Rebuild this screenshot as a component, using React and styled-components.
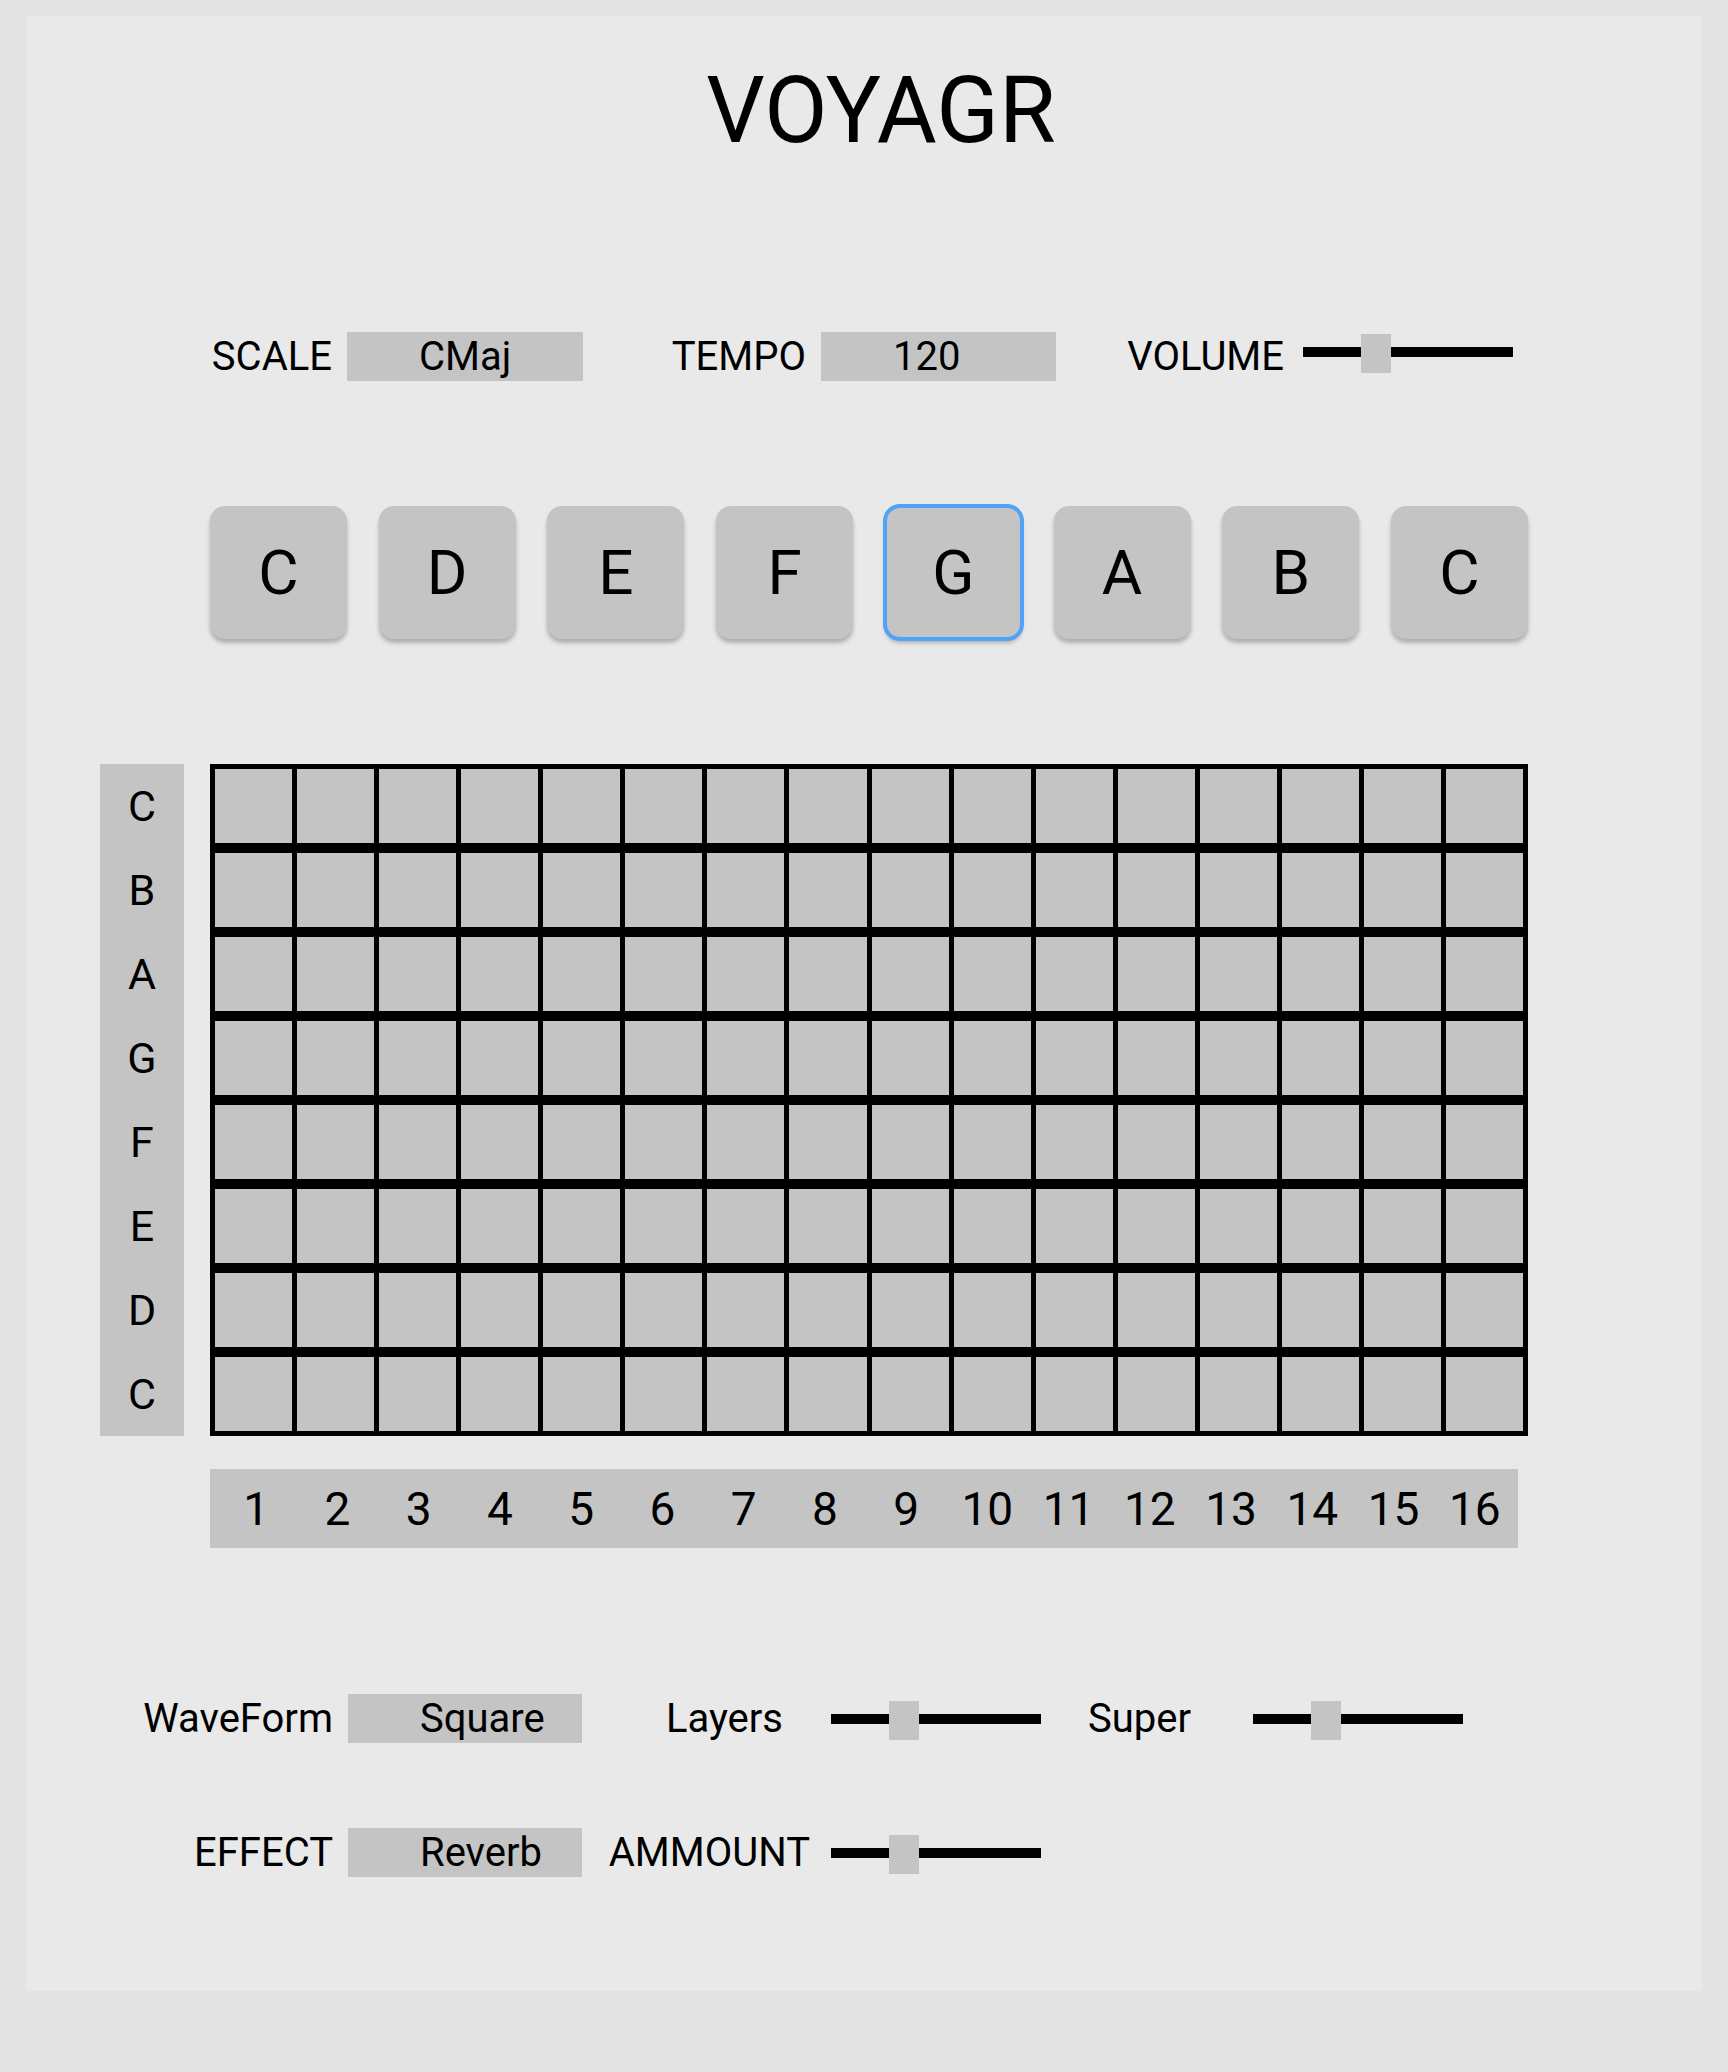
import React from "react"
import styled, { createGlobalStyle } from "styled-components"

const GlobalStyle = createGlobalStyle`
  html, body {
    margin: 0;
    padding: 0;
    background: #e3e3e3;
  }
  body {
    font-family: Roboto, "Liberation Sans", sans-serif;
    color: #000;
  }
`

const Page = styled.div`
  padding: 16px 26px 82px;
`

const Panel = styled.main`
  background: #e9e9e9;
  padding: 50px 0 114px;
  display: flex;
  flex-direction: column;
  align-items: flex-start;
`

const Title = styled.h1`
  align-self: stretch;
  margin: 0;
  padding-left: 34px;
  text-align: center;
  font-size: 92px;
  line-height: 90px;
  font-weight: 400;
`

const ControlRow = styled.div`
  display: flex;
  align-items: ${(p) => (p.top ? "flex-start" : "center")};
  margin-top: ${(p) => p.mt}px;
  margin-left: 100px;
`

const Field = styled.div`
  display: flex;
  align-items: inherit;
  gap: ${(p) => p.gap || 15}px;
`

const Label = styled.span`
  width: ${(p) => p.w}px;
  text-align: right;
  font-size: 40px;
  line-height: 49px;
  white-space: nowrap;
`

const ValueBox = styled.div`
  box-sizing: border-box;
  width: ${(p) => p.w || 236}px;
  height: 49px;
  padding-left: 72px;
  background: #c4c4c4;
  font-size: 40px;
  line-height: 49px;
`

const Slider = styled.input.attrs({ type: "range", min: 0, max: 100 })`
  -webkit-appearance: none;
  appearance: none;
  width: 210px;
  height: 39px;
  margin: 0;
  padding: 0;
  background: transparent;

  &::-webkit-slider-runnable-track {
    height: 10px;
    background: #000;
    border: none;
  }

  &::-webkit-slider-thumb {
    -webkit-appearance: none;
    appearance: none;
    width: 30px;
    height: 39px;
    margin-top: -13px;
    background: #c4c4c4;
    border: none;
    border-radius: 0;
  }
`

const NoteRow = styled.div`
  display: flex;
  justify-content: space-between;
  width: 1318px;
  margin: 125px 0 0 184px;
`

const NoteButton = styled.button`
  width: 137px;
  height: 133px;
  padding: 0;
  border: none;
  border-radius: 15px;
  background: #c4c4c4;
  box-shadow: 0 4px 4px rgba(0, 0, 0, 0.25);
  font-family: Roboto, "Liberation Sans", sans-serif;
  font-size: 62px;
  color: #000;
  outline: ${(p) => (p.active ? "4px solid #4fa3f8" : "none")};
  outline-offset: -2px;
`

const Sequencer = styled.section`
  display: flex;
  gap: 26px;
  margin: 125px 0 0 74px;
`

const RowLabels = styled.div`
  width: 84px;
  background: #c4c4c4;
`

const RowLabel = styled.div`
  height: 84px;
  display: flex;
  align-items: center;
  justify-content: center;
  font-size: 43px;
`

const Grid = styled.div`
  width: 1318px;
  display: flex;
  flex-direction: column;
`

const GridRow = styled.div`
  box-sizing: border-box;
  height: 84px;
  display: grid;
  grid-template-columns: repeat(16, 1fr);
  gap: 5px;
  border: 5px solid #000;
  background: #000;
`

const Cell = styled.div`
  background: #c4c4c4;
`

const StepBar = styled.div`
  box-sizing: border-box;
  width: 1308px;
  height: 79px;
  margin: 33px 0 0 184px;
  padding: 0 5px 0 8px;
  display: grid;
  grid-template-columns: repeat(16, 1fr);
  gap: 5px;
  align-items: center;
  justify-items: center;
  background: #c4c4c4;
  font-size: 46px;
`

const notes = ["C", "D", "E", "F", "G", "A", "B", "C"]
const rows = ["C", "B", "A", "G", "F", "E", "D", "C"]
const steps = Array.from({ length: 16 }, (_, i) => i + 1)

const App = () => {
  return (
    <Page>
      <GlobalStyle />
      <Panel>
        <Title>VOYAGR</Title>

        <ControlRow mt={176} top>
          <Field>
            <Label w={206}>SCALE</Label>
            <ValueBox w={236}>CMaj</ValueBox>
          </Field>
          <Field>
            <Label w={223}>TEMPO</Label>
            <ValueBox w={235}>120</ValueBox>
          </Field>
          <Field gap={19}>
            <Label w={228}>VOLUME</Label>
            <Slider defaultValue={32} />
          </Field>
        </ControlRow>

        <NoteRow>
          {notes.map((n, i) => (
            <NoteButton key={i} active={n === "G"}>
              {n}
            </NoteButton>
          ))}
        </NoteRow>

        <Sequencer>
          <RowLabels>
            {rows.map((r, i) => (
              <RowLabel key={i}>{r}</RowLabel>
            ))}
          </RowLabels>
          <Grid>
            {rows.map((r, i) => (
              <GridRow key={i}>
                {steps.map((s) => (
                  <Cell key={s} />
                ))}
              </GridRow>
            ))}
          </Grid>
        </Sequencer>

        <StepBar>
          {steps.map((s) => (
            <span key={s}>{s}</span>
          ))}
        </StepBar>

        <ControlRow mt={146}>
          <Field>
            <Label w={207}>WaveForm</Label>
            <ValueBox w={234}>Square</ValueBox>
          </Field>
          <Field gap={48}>
            <Label w={201}>Layers</Label>
            <Slider defaultValue={32} />
          </Field>
          <Field gap={62}>
            <Label w={150}>Super</Label>
            <Slider defaultValue={32} />
          </Field>
        </ControlRow>

        <ControlRow mt={85}>
          <Field>
            <Label w={207}>EFFECT</Label>
            <ValueBox w={234}>Reverb</ValueBox>
          </Field>
          <Field gap={21}>
            <Label w={228}>AMMOUNT</Label>
            <Slider defaultValue={32} />
          </Field>
        </ControlRow>
      </Panel>
    </Page>
  )
}

export default App
